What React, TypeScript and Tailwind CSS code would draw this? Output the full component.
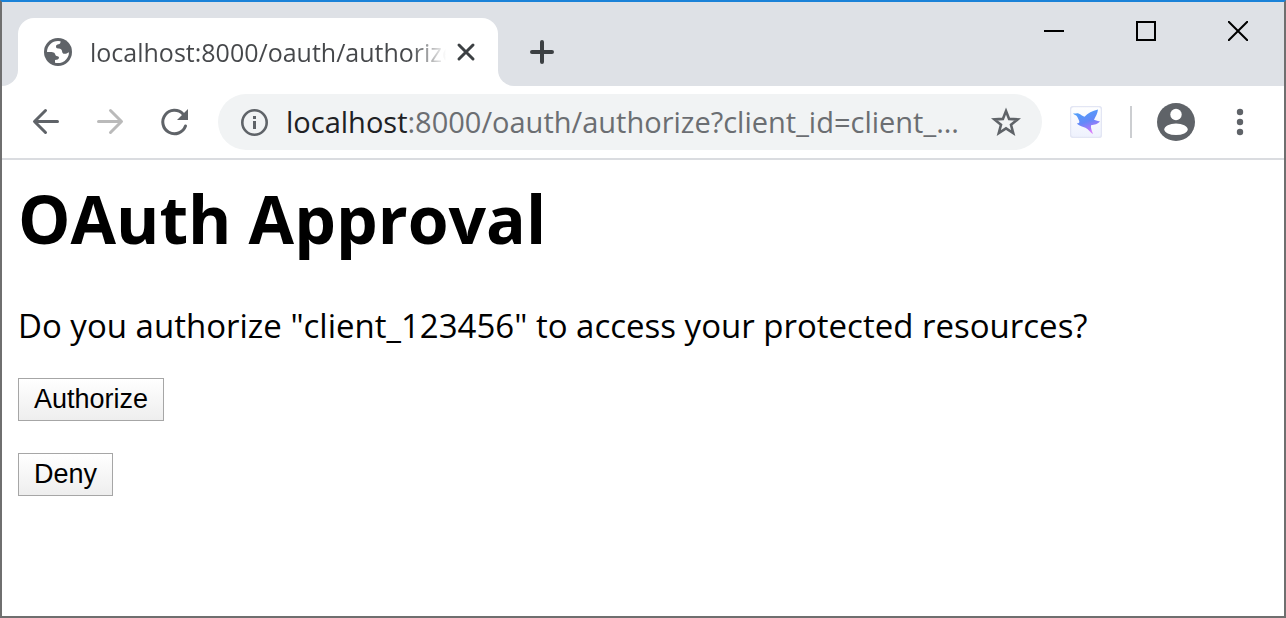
import React from 'react';

function GlobeIcon() {
  return (
    <svg className="size-7 shrink-0" viewBox="0 0 28 28" aria-hidden="true">
      <circle cx="14" cy="14" r="14" fill="#5f6368" />
      <path
        fill="#fff"
        d="M3 14A11 11 0 0 1 14 3L16.500 3.200C16.700 5 16 6 14.500 6.300C13 6.500 12 7.200 12 8.500C12 9.800 12.600 10.400 14 10.500C16.500 10.300 17.800 11.200 18 13C18.200 15 19 16 21 15.800C22.500 15.600 23.500 15 25 14.200A11 11 0 0 1 11 24.700L11 22C13 21.900 14.800 21.300 15 19.800C15.100 18.400 14 18 12.500 17.900C11.200 17.700 11.200 15.700 10.200 14.800C9.400 14.200 8 14 6.500 14Z"
      />
    </svg>
  );
}

function BirdIcon() {
  return (
    <svg className="size-8" viewBox="0 0 32 32" aria-hidden="true">
      <defs>
        <linearGradient id="bird" x1="0" y1="0" x2="0.4" y2="1">
          <stop offset="0" stopColor="#4aa8fa" />
          <stop offset="0.6" stopColor="#6488f8" />
          <stop offset="0.9" stopColor="#a878fa" />
          <stop offset="1" stopColor="#d880fa" />
        </linearGradient>
        <linearGradient id="tile" x1="0" y1="0" x2="0" y2="1">
          <stop offset="0" stopColor="#fff" />
          <stop offset="1" stopColor="#eef1fd" />
        </linearGradient>
      </defs>
      <rect x="0.500" y="0.500" width="31" height="31" rx="3" fill="url(#tile)" stroke="#e3e6f4" strokeWidth="1.500" />
      <path
        fill="url(#bird)"
        d="M3 7.500C5 7.800 6.500 7 8.500 7.400C11 8 12 10 14.500 10.800C18 7 22 5 28 3.500C27.500 7.500 26 10 24 13.700C26 14.500 28 15 30 15.500C28 18 24.500 18.800 21 19.200C20.500 22 22 25 23 28C19.500 26 18 22.500 14 21.300C10 20 7.500 18.500 6.800 17.500C9 17.400 10 16.500 9 14.500C8 12.500 7.500 11 6.500 9.800C5.500 9 4 8.800 3 7.500Z"
      />
    </svg>
  );
}

export default function App() {
  return (
    <div className="flex min-h-screen flex-col border-2 border-[#6f6f6f] border-t-[#1a82d8] bg-white font-['Open_Sans','Noto_Sans',sans-serif]">
      <header>
        <div className="flex h-[84px] items-end bg-[#dee1e6]">
          <div className="flex h-4 w-4 shrink-0 bg-white">
            <div className="flex-1 rounded-br-2xl bg-[#dee1e6]" />
          </div>
          <div className="flex h-[68px] w-[480px] items-center rounded-t-2xl bg-white pr-5 pl-[26px]">
            <GlobeIcon />
            <span className="ml-[18px] min-w-0 flex-1 overflow-hidden bg-linear-to-r from-[#45474a] from-90% to-transparent bg-clip-text text-[25px] leading-8 whitespace-nowrap text-transparent">
              localhost:8000/oauth/authorize
            </span>
            <button type="button" aria-label="Close tab" className="ml-2 flex size-6 shrink-0 items-center justify-center">
              <svg className="size-6" viewBox="0 0 24 24" stroke="#3c4043" strokeWidth="3" strokeLinecap="round">
                <path d="M5 5L19 19M19 5L5 19" />
              </svg>
            </button>
          </div>
          <div className="flex h-4 w-4 shrink-0 bg-white">
            <div className="flex-1 rounded-bl-2xl bg-[#dee1e6]" />
          </div>
          <button type="button" aria-label="New tab" className="mb-5 ml-3.5 flex size-7 items-center justify-center">
            <svg className="size-7" viewBox="0 0 28 28" stroke="#3c4043" strokeWidth="4" strokeLinecap="round">
              <path d="M14 4V24M4 14H24" />
            </svg>
          </button>
          <div className="ml-auto flex self-start">
            <button type="button" aria-label="Minimize" className="flex h-[58px] w-[92px] items-center justify-center">
              <svg className="size-5" viewBox="0 0 20 20" fill="#000">
                <path d="M0 9H20V11H0Z" />
              </svg>
            </button>
            <button type="button" aria-label="Maximize" className="flex h-[58px] w-[92px] items-center justify-center">
              <svg className="size-5" viewBox="0 0 20 20" fill="none" stroke="#000" strokeWidth="2">
                <path d="M1 1H19V19H1Z" />
              </svg>
            </button>
            <button type="button" aria-label="Close" className="flex h-[58px] w-[92px] items-center justify-center">
              <svg className="size-5" viewBox="0 0 20 20" stroke="#000" strokeWidth="2">
                <path d="M0 0L20 20M20 0L0 20" />
              </svg>
            </button>
          </div>
        </div>
        <div className="flex h-[74px] items-center border-b-2 border-[#dadce0] pr-7 pl-7">
          <button type="button" aria-label="Back" className="flex size-8 items-center justify-center">
            <svg className="size-8" viewBox="0 0 32 32" fill="none" stroke="#5f6368" strokeWidth="3" strokeLinecap="round" strokeLinejoin="round">
              <path d="M27.500 15.500H5M15.500 4.500L4.500 15.500L15.500 26.500" />
            </svg>
          </button>
          <button type="button" aria-label="Forward" className="ml-8 flex size-8 items-center justify-center">
            <svg className="size-8" viewBox="0 0 32 32" fill="none" stroke="#bababa" strokeWidth="3" strokeLinecap="round" strokeLinejoin="round">
              <path d="M4.500 15.500H27M16.500 4.500L27.500 15.500L16.500 26.500" />
            </svg>
          </button>
          <button type="button" aria-label="Reload" className="ml-8 flex size-8 items-center justify-center">
            <svg className="size-8" viewBox="0 0 32 32" fill="none">
              <path d="M27.500 20A11.700 11.700 0 1 1 25 8" stroke="#5f6368" strokeWidth="3" strokeLinecap="round" />
              <path d="M30 3V14H19Z" fill="#5f6368" />
            </svg>
          </button>
          <div className="ml-7 flex h-14 min-w-0 flex-1 items-center rounded-full bg-[#f1f3f4] px-5">
            <svg className="size-8 shrink-0" viewBox="0 0 32 32" aria-hidden="true">
              <circle cx="16.500" cy="16.500" r="12.200" fill="none" stroke="#5f6368" strokeWidth="2.600" />
              <path d="M15 10H18V13H15ZM15 15H18V23H15Z" fill="#5f6368" />
            </svg>
            <span className="ml-4 min-w-0 flex-1 truncate text-[29px] leading-10 text-[#6b6e72]">
              <span className="text-[#202124]">localhost</span>:8000/oauth/authorize?client_id=client_...
            </span>
            <button type="button" aria-label="Bookmark this page" className="flex size-8 shrink-0 items-center justify-center">
              <svg className="size-8" viewBox="0 0 32 32" fill="none" stroke="#5f6368" strokeWidth="2.600">
                <path d="M16 5L19.100 12.900L27.600 13.400L21 18.800L23.200 27L16 22.400L8.800 27L11 18.800L4.400 13.400L12.900 12.900Z" />
              </svg>
            </button>
          </div>
          <button type="button" aria-label="Bird extension" className="ml-7 size-8">
            <BirdIcon />
          </button>
          <div className="ml-7 h-8 w-[2px] bg-[#ccced1]" />
          <button type="button" aria-label="Profile" className="ml-6 size-10">
            <svg className="size-10" viewBox="0 0 40 40">
              <circle cx="20" cy="20" r="19" fill="#5f6368" />
              <circle cx="20" cy="12.500" r="5.700" fill="#fff" />
              <ellipse cx="20" cy="27.300" rx="11.700" ry="5.800" fill="#fff" />
            </svg>
          </button>
          <button type="button" aria-label="Menu" className="ml-7 size-8">
            <svg className="size-8" viewBox="0 0 32 32" fill="#5f6368">
              <circle cx="16" cy="6" r="3.200" />
              <circle cx="16" cy="16" r="3.200" />
              <circle cx="16" cy="26" r="3.200" />
            </svg>
          </button>
        </div>
      </header>
      <main className="px-4 pt-4 pb-8 text-black">
        <h1 className="text-[66px] leading-[84px] font-bold">OAuth Approval</h1>
        <p className="mt-11 text-[33px] leading-[44px]">
          Do you authorize "client_123456" to access your protected resources?
        </p>
        <div className="mt-[30px] flex flex-col items-start gap-8 font-['Liberation_Sans',Arial,sans-serif] text-[27px]">
          <button type="button" className="h-[43px] border border-[#a6a6a6] bg-linear-to-b from-white to-[#eeeeee] px-[15px] pb-0.5 leading-8">
            Authorize
          </button>
          <button type="button" className="h-[43px] border border-[#a6a6a6] bg-linear-to-b from-white to-[#eeeeee] px-[15px] pb-0.5 leading-8">
            Deny
          </button>
        </div>
      </main>
    </div>
  );
}
